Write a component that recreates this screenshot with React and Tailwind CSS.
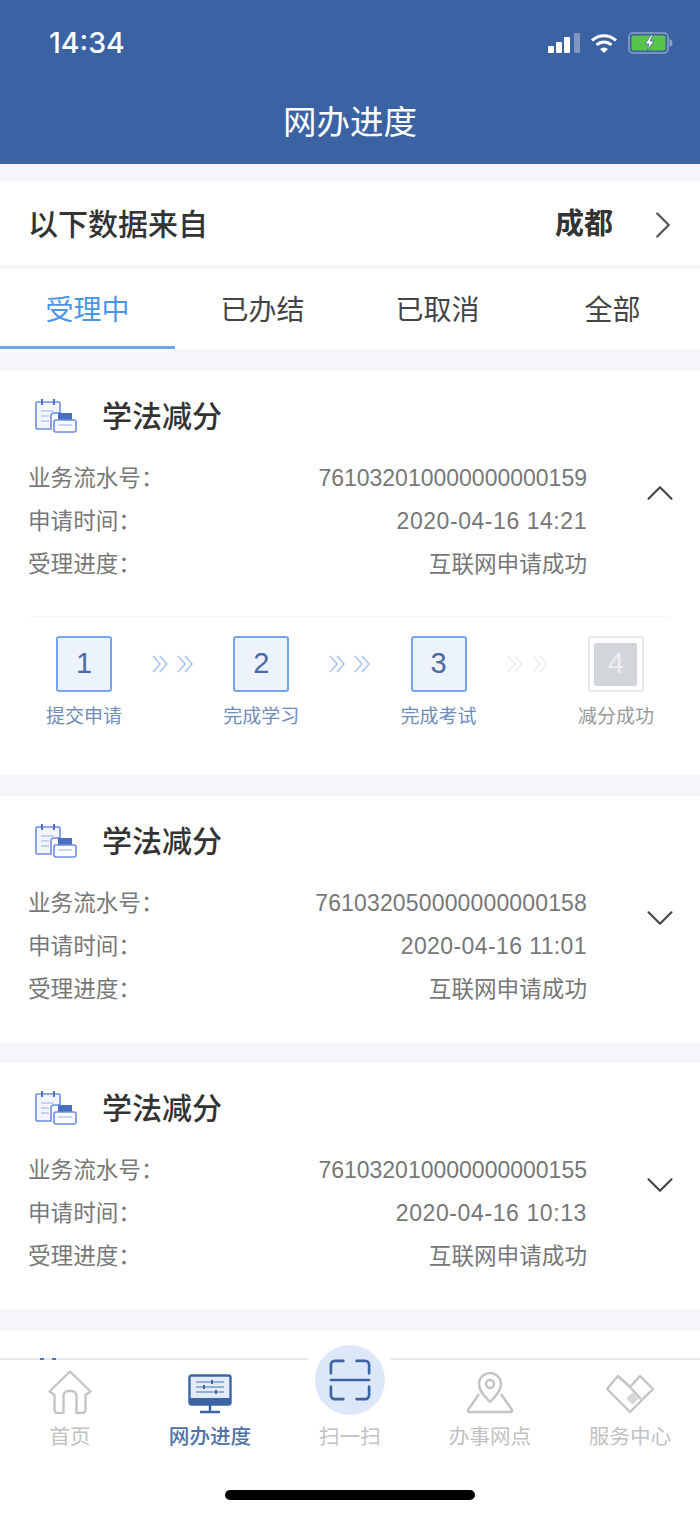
import React from "react";
import { ChevronRight, ChevronUp, ChevronDown } from "lucide-react";

const CJK = "font-['Liberation_Sans','Noto_Sans_CJK_SC',sans-serif]";

const records = [
    { no: "761032010000000000159", time: "2020-04-16 14:21", noTrack: "", timeTrack: "tracking-[0.55px]", open: true },
    { no: "761032050000000000158", time: "2020-04-16 11:01", noTrack: "tracking-[0.15px]", timeTrack: "tracking-[0.4px]" },
    { no: "761032010000000000155", time: "2020-04-16 10:13", noTrack: "", timeTrack: "tracking-[0.6px]" },
];

const steps = [
    { n: 1, label: "提交申请", done: true },
    { n: 2, label: "完成学习", done: true },
    { n: 3, label: "完成考试", done: true },
    { n: 4, label: "减分成功", done: false },
];

const CardIcon = () => (
    <svg width="42" height="36" viewBox="0 0 42 36" fill="none" className="shrink-0">
        <path d="M2 4h22a1 1 0 0 1 1 1v10h-6a3 3 0 0 0-3 3v13H2a1 1 0 0 1-1-1V5a1 1 0 0 1 1-1z" stroke="#6c8fdc" strokeWidth="1.6" fill="#f3f6fd" />
        <path d="M7 1v6M19 1v6" stroke="#4d73c9" strokeWidth="2" />
        <path d="M6 13h13M6 18h8M6 23h8" stroke="#b9c9ec" strokeWidth="1.5" />
        <rect x="23" y="15" width="14" height="7" fill="#4a6fc0" />
        <path d="M21 22h18a2 2 0 0 1 2 2v8a2 2 0 0 1-2 2H21a2 2 0 0 1-2-2v-8a2 2 0 0 1 2-2z" stroke="#6c8fdc" strokeWidth="1.6" fill="#fff" />
        <path d="M23 27h14" stroke="#b9c9ec" strokeWidth="1.5" />
    </svg>
);

const Arrows = ({ color }) => (
    <svg width="41" height="18" viewBox="0 0 41 18" fill="none" stroke={color} strokeWidth="1.5" className="shrink-0">
        <path d="M1 1l7 8-7 8M8 1l7 8-7 8M26 1l7 8-7 8M33 1l7 8-7 8" />
    </svg>
);

const Row = ({ label, value, mono, track }) => (
    <div className="flex items-center justify-between h-[43px]">
        <span className="text-[22.6px] text-[#777]">{label}</span>
        <span className={mono ? `text-[23px] text-[#777] ${track}` : "text-[22.6px] text-[#777]"}>{value}</span>
    </div>
);

const Stepper = () => (
    <div className="mx-[30px] border-t border-[#f7f7f7] pt-[19px] flex justify-between">
        {steps.map((s, i) => (
            <React.Fragment key={s.n}>
                <div className="w-[110px] -mx-[1px] flex flex-col items-center">
                    {s.done ? (
                        <div className="w-[56px] h-[56px] rounded-[3px] border-2 border-[#76a3ee] bg-[#edf3fc] flex items-center justify-center text-[29px] text-[#4a6aa5]">
                            {s.n}
                        </div>
                    ) : (
                        <div className="w-[56px] h-[56px] rounded-[3px] border-2 border-[#e8e8e8] flex items-center justify-center">
                            <div className="w-[43px] h-[43px] rounded-[2px] bg-[#d2d5da] flex items-center justify-center text-[29px] text-[#eee]">
                                {s.n}
                            </div>
                        </div>
                    )}
                    <span className={`mt-[11px] text-[19px] ${s.done ? "text-[#6f8dbb]" : "text-[#999]"}`}>{s.label}</span>
                </div>
                {i < 3 && (
                    <div className="flex h-[56px] items-center w-[44px] justify-center">
                        <Arrows color={i === 2 ? "#ececec" : "#a9c3ef"} />
                    </div>
                )}
            </React.Fragment>
        ))}
    </div>
);

const Card = ({ no, time, noTrack, timeTrack, open }) => (
    <section className={`bg-white mb-[21px] ${open ? "h-[404px]" : "h-[246px]"}`}>
        <div className="flex items-center h-[86px] pl-[35px] pt-[4px]">
            <CardIcon />
            <span className="ml-[25px] text-[30px] text-[#333] font-medium">学法减分</span>
        </div>
        <div className="flex items-center pl-[28px] pr-[27px]">
            <div className="flex-1">
                <Row label="业务流水号：" value={no} mono track={noTrack} />
                <Row label="申请时间：" value={time} mono track={timeTrack} />
                <Row label="受理进度：" value="互联网申请成功" />
            </div>
            <div className="w-[96px] flex justify-end -mr-[10px] -mt-[58px] text-[#444]">
                {open ? <ChevronUp size={46} strokeWidth={1.1} /> : <ChevronDown size={46} strokeWidth={1.1} />}
            </div>
        </div>
        {open && (
            <div className="mt-[30px]">
                <Stepper />
            </div>
        )}
    </section>
);

const NavItem = ({ icon, label, active }) => (
    <div className="w-[140px] flex flex-col items-center">
        <div className="h-[54px] flex items-end justify-center">{icon}</div>
        <span className={`mt-[8px] text-[20.6px] ${active ? "text-[#4f72a9] font-medium" : "text-[#c2c2c2]"}`}>{label}</span>
    </div>
);

export default function App() {
    return (
        <div className={`w-[700px] h-[1514px] overflow-hidden flex flex-col bg-[#f5f6fa] ${CJK}`}>
            <header className="h-[164px] shrink-0 bg-[#3b62a2] text-white relative">
                <div className="flex items-center justify-between pl-[49px] pr-[26px] pt-[24px] h-[62px]">
                    <span className="text-[28.5px] font-medium font-['Inter',sans-serif]">14:34</span>
                    <div className="flex items-center gap-[10px]">
                        <svg width="32" height="20" viewBox="0 0 32 20">
                            <rect x="0" y="13" width="6" height="7" rx="1" fill="#fff" />
                            <rect x="8" y="9" width="6" height="11" rx="1" fill="#fff" />
                            <rect x="16" y="4" width="6" height="16" rx="1" fill="#fff" />
                            <rect x="26" y="0" width="6" height="20" rx="1" fill="#7f97c2" />
                        </svg>
                        <svg width="28" height="21" viewBox="0 0 28 21" fill="none">
                            <path d="M2 7.500C9 1 19 1 26 7.500" stroke="#fff" strokeWidth="3" />
                            <path d="M6.500 12c4.500-4 10.500-4 15 0" stroke="#fff" strokeWidth="3" />
                            <path d="M10 16c2.500-2 5.500-2 8 0l-4 4z" fill="#fff" />
                        </svg>
                        <svg width="46" height="22" viewBox="0 0 46 22" fill="none">
                            <rect x="1" y="1" width="39" height="20" rx="4" stroke="#8ea3c9" strokeWidth="1.500" />
                            <rect x="3.500" y="3.500" width="34" height="15" rx="2" fill="#58c44c" />
                            <path d="M41.500 7.500c2 0 3 1.500 3 3.500s-1 3.500-3 3.500z" fill="#8ea3c9" />
                            <path d="M23 3l-6 9h4l-2 7 7-10h-4l3-6z" fill="#fff" stroke="#3b62a2" strokeWidth="0.8" />
                        </svg>
                    </div>
                </div>
                <h1 className="text-center text-[33.5px] font-normal mt-[36px]">网办进度</h1>
            </header>

            <main className="flex-1 min-h-0 overflow-hidden pt-[18px]">
                <div className="h-[83px] bg-white flex items-center justify-between pl-[28px] pr-[28px] pt-[2px]">
                    <span className="text-[30px] text-[#333] font-medium">以下数据来自</span>
                    <div className="flex items-center gap-[27px]">
                        <span className="text-[29px] text-[#333] font-bold">成都</span>
                        <ChevronRight size={46} strokeWidth={1.2} className="text-[#555] -mr-[14px]" />
                    </div>
                </div>
                <nav className="mt-[4px] h-[80px] bg-white grid grid-cols-4 mb-[22px]">
                    {["受理中", "已办结", "已取消", "全部"].map((t, i) => (
                        <div
                            key={t}
                            className={`flex items-center justify-center pt-[6px] text-[28px] border-b-[3px] ${
                                i === 0 ? "text-[#4c94e8] border-[#6ea6ea]" : "text-[#444] border-transparent"
                            }`}
                        >
                            {t}
                        </div>
                    ))}
                </nav>
                {records.map((r) => (
                    <Card key={r.no} {...r} />
                ))}
                <div className="bg-white h-[40px]" />
            </main>

            <footer className="h-[156px] shrink-0 bg-white border-t-2 border-[#e6e7ea] relative">
                <div className="flex items-start">
                    <NavItem
                        label="首页"
                        icon={
                            <svg width="44" height="44" viewBox="0 0 44 44" fill="none" stroke="#c4c4c4" strokeWidth="2.400" strokeLinejoin="round">
                                <path d="M1.500 21.500 22 1.500l20.500 20-5 3.500v15a3 3 0 0 1-3 3h-6V26a5 5 0 0 0-5-5h-3a5 5 0 0 0-5 5v17h-6a3 3 0 0 1-3-3V25z" />
                            </svg>
                        }
                    />
                    <NavItem
                        active
                        label="网办进度"
                        icon={
                            <svg width="44" height="40" viewBox="0 0 44 40" fill="none">
                                <rect x="1.500" y="1.500" width="41" height="29" rx="2" fill="#e3ebf6" stroke="#3d64a5" strokeWidth="2.400" />
                                <rect x="1" y="24" width="42" height="6" fill="#3d64a5" />
                                <path d="M8 8h28M8 13h28M8 18h28" stroke="#7f9ac7" strokeWidth="1.500" />
                                <path d="M24 6v4M16 11v4M28 16v4" stroke="#3d64a5" strokeWidth="2" />
                                <path d="M22 30v7M12 38h20" stroke="#3d64a5" strokeWidth="2.400" />
                            </svg>
                        }
                    />
                    <div className="w-[140px] flex flex-col items-center">
                        <div className="h-[54px]" />
                        <span className="mt-[8px] text-[20.6px] text-[#c2c2c2]">扫一扫</span>
                    </div>
                    <NavItem
                        label="办事网点"
                        icon={
                            <svg width="48" height="42" viewBox="0 0 48 42" fill="none" stroke="#c4c4c4" strokeWidth="2.400" strokeLinejoin="round">
                                <path d="M24 30C17 23 13 18 13 12a11 11 0 0 1 22 0c0 6-4 11-11 18z" />
                                <circle cx="24" cy="12" r="4" />
                                <path d="M13 22 2 38a1.500 1.500 0 0 0 1 2h42a1.500 1.500 0 0 0 1-2L35 22" />
                            </svg>
                        }
                    />
                    <NavItem
                        label="服务中心"
                        icon={
                            <svg width="50" height="40" viewBox="0 0 50 40" fill="none" stroke="#c4c4c4" strokeWidth="2.400" strokeLinejoin="round">
                                <path d="M13 2 25 13 35 2l13 13-23 23L2 15z" />
                                <path d="M25 13l11 12" />
                                <rect x="23" y="20" width="9" height="9" fill="#d8d8d8" stroke="none" transform="rotate(45 27.500 24.500)" />
                            </svg>
                        }
                    />
                </div>
                {/* card icon showing through the bar edge */}
                <div className="absolute left-[40px] -top-[2px] flex gap-[8px]">
                    <span className="w-[4px] h-[2px] bg-[#4d73c9]" />
                    <span className="w-[4px] h-[2px] bg-[#4d73c9]" />
                </div>
                <div className="absolute -top-[2px] left-[308px] w-[83px] h-[2px] bg-white" />
                <div className="absolute left-[315px] -top-[15px] w-[70px] h-[70px] rounded-full bg-[#dce8f9] flex items-center justify-center">
                    <svg width="42" height="42" viewBox="0 0 44 44" fill="none" stroke="#3d64a5" strokeWidth="2.800" strokeLinecap="round">
                        <path d="M15 2H6a4 4 0 0 0-4 4v9M29 2h9a4 4 0 0 1 4 4v9M15 42H6a4 4 0 0 1-4-4v-9M29 42h9a4 4 0 0 0 4-4v-9M2 22h40" />
                    </svg>
                </div>
                <div className="absolute left-[225px] top-[130px] w-[250px] h-[10px] rounded-full bg-black" />
            </footer>
        </div>
    );
}
